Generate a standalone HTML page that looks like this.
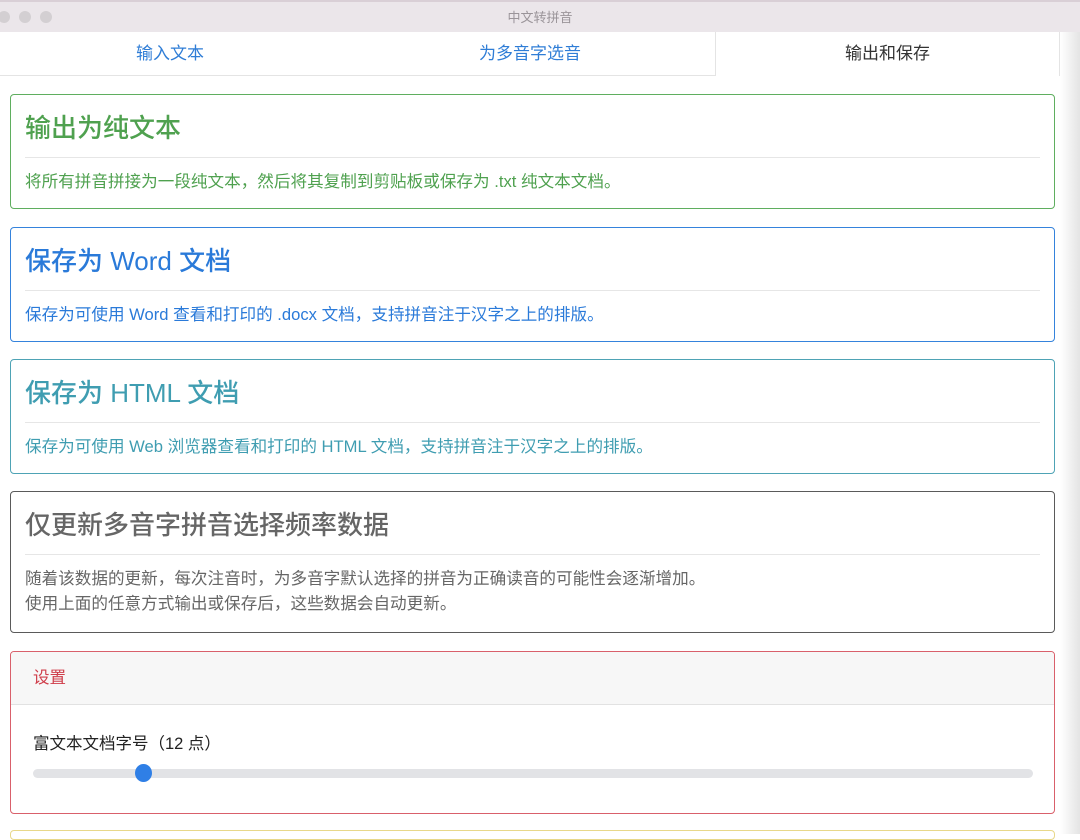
<!DOCTYPE html>
<html><head><meta charset="utf-8"><style>
*{box-sizing:border-box;margin:0;padding:0}
body{width:1080px;height:834px;overflow:hidden;background:#fff;font-family:"Liberation Sans","Noto Sans CJK SC",sans-serif;position:relative}
.tb{position:absolute;left:0;top:0;width:1080px;height:32px;background:#ebe6ea;border-top:2px solid #d9cfd6}
.tb .t{position:absolute;left:0;right:0;top:5px;text-align:center;font-size:13px;color:#9a9499}
.dot{position:absolute;top:9px;width:12px;height:12px;border-radius:50%;background:#d3cfd2}
.tabs{position:absolute;top:32px;left:0;width:1062px;height:44px}
.tab{position:absolute;top:0;height:44px;text-align:center;line-height:44px;font-size:17px;color:#2f7dd6}
.card{position:absolute;left:10px;width:1045px;border:1px solid;border-radius:4px;padding:0 14px}
.card h2{font-size:26px;font-weight:500;margin-top:13px;height:34px}
.card hr{border:0;border-top:1px solid #e6e6e6;margin:15px 0 11px}
.card p{font-size:16.6px;line-height:25px}
.sh{position:absolute;left:1060px;top:32px;width:20px;height:802px;background:linear-gradient(90deg,#fff,#e4e4e4)}
</style></head><body>
<div class="tb"><div class="dot" style="left:-2px"></div><div class="dot" style="left:19px"></div><div class="dot" style="left:40px"></div><div class="t">中文转拼音</div></div>
<div class="tabs">
<div class="tab" style="left:0;width:715px;border-bottom:1px solid #e4e4e4"></div>
<div class="tab" style="left:0;width:340px">输入文本</div>
<div class="tab" style="left:360px;width:340px">为多音字选音</div>
<div class="tab" style="left:715px;width:345px;color:#333;border-left:1px solid #e4e4e4;border-right:1px solid #e4e4e4;background:#fff">输出和保存</div>
</div>
<div class="sh"></div>
<div class="card" style="top:94px;height:115px;border-color:#5fae5f;color:#4fa14f"><h2>输出为纯文本</h2><hr><p>将所有拼音拼接为一段纯文本，然后将其复制到剪贴板或保存为 .txt 纯文本文档。</p></div>
<div class="card" style="top:227px;height:115px;border-color:#3583dc;color:#2a7ad9"><h2>保存为 Word 文档</h2><hr><p>保存为可使用 Word 查看和打印的 .docx 文档，支持拼音注于汉字之上的排版。</p></div>
<div class="card" style="top:359px;height:115px;border-color:#4ea3b5;color:#3f9db1"><h2>保存为 HTML 文档</h2><hr><p>保存为可使用 Web 浏览器查看和打印的 HTML 文档，支持拼音注于汉字之上的排版。</p></div>
<div class="card" style="top:491px;height:142px;border-color:#5a5a5a;color:#666"><h2>仅更新多音字拼音选择频率数据</h2><hr><p>随着该数据的更新，每次注音时，为多音字默认选择的拼音为正确读音的可能性会逐渐增加。<br>使用上面的任意方式输出或保存后，这些数据会自动更新。</p></div>
<div class="card" style="top:651px;height:163px;border-color:#d9606b;padding:0;overflow:hidden">
<div style="height:53px;background:#f7f7f7;border-bottom:1px solid #e2e2e2;color:#cf3d4a;font-size:16.5px;line-height:53px;padding-left:22px">设置</div>
<div style="position:absolute;left:22px;top:78px;font-size:16.5px;color:#222">富文本文档字号（12 点）</div>
<div style="position:absolute;left:22px;top:117px;width:1000px;height:9px;border-radius:5px;background:#e2e3e6"></div>
<div style="position:absolute;left:124px;top:112px;width:17px;height:18px;border-radius:50%;background:#2f7fe6"></div>
</div>
<div style="position:absolute;left:10px;top:830px;width:1045px;height:10px;border:1px solid #e8d88a;border-radius:4px"></div>
</body></html>
